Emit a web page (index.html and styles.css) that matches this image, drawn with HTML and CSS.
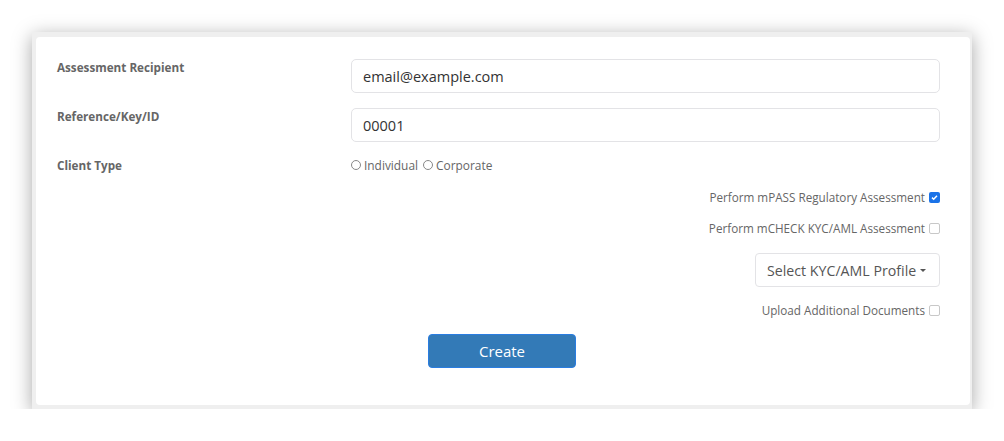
FILE: index.html
```html
<!DOCTYPE html>
<html lang="en">
<head>
    <meta charset="UTF-8">
    <meta name="viewport" content="width=device-width, initial-scale=1.0">
    <title>Create Assessment</title>
    <link rel="stylesheet" href="styles.css">
</head>
<body>
    <div class="frame">
        <form class="card" action="createAssessment">
            <div class="row">
                <label class="row-label" for="recipient">Assessment Recipient</label>
                <input class="text-input" type="text" id="recipient" name="recipient" value="email@example.com">
            </div>

            <div class="row">
                <label class="row-label" for="reference">Reference/Key/ID</label>
                <input class="text-input" type="text" id="reference" name="reference" value="00001">
            </div>

            <div class="row">
                <span class="row-label">Client Type</span>
                <div class="radios">
                    <label class="radio"><span class="radio-dot"></span>Individual</label>
                    <label class="radio"><span class="radio-dot"></span>Corporate</label>
                </div>
            </div>

            <div class="option first">
                <span>Perform mPASS Regulatory Assessment</span>
                <span class="check checked">
                    <svg viewBox="0 0 11 11" width="11" height="11"><path d="M3 5.6 L4.7 7.2 L8 3.8" fill="none" stroke="#fff" stroke-width="1.5"/></svg>
                </span>
            </div>

            <div class="option">
                <span>Perform mCHECK KYC/AML Assessment</span>
                <span class="check"></span>
            </div>

            <div class="option profile">
                <button type="button" class="select-btn">Select KYC/AML Profile<span class="caret"></span></button>
            </div>

            <div class="option">
                <span>Upload Additional Documents</span>
                <span class="check"></span>
            </div>

            <div class="actions">
                <button type="submit" class="create-btn">Create</button>
            </div>
        </form>
    </div>
</body>
</html>
```

FILE: styles.css
```css
body {
    margin: 0;
    padding: 32px 32px 0 32px;
    background-color: #fff;
    font-family: "Open Sans", Arial, sans-serif;
}

.frame {
    width: 940px;
    height: 377px;
    box-sizing: border-box;
    padding: 5px 2px 4px 4px;
    background-color: #efefef;
    box-shadow: 0 4px 18px rgba(0, 0, 0, 0.35);
}

.card {
    height: 100%;
    box-sizing: border-box;
    background-color: #fff;
    border-radius: 4px;
    padding: 22px 30px 0 21px;
    display: flex;
    flex-direction: column;
    gap: 15px;
}

.row {
    display: grid;
    grid-template-columns: 294px 1fr;
    align-items: start;
}

.row-label {
    font-size: 11.7px;
    font-weight: bold;
    line-height: 16px;
    color: #666;
}

.text-input {
    height: 34px;
    box-sizing: border-box;
    border: 1px solid #e3e3e6;
    border-radius: 5px;
    padding: 0 11px;
    font-family: "Open Sans", Arial, sans-serif;
    font-size: 14.5px;
    color: #333;
}

.radios {
    display: flex;
    align-items: center;
    gap: 5px;
    height: 16px;
}

.radio {
    display: flex;
    align-items: center;
    font-size: 11.9px;
    color: #666;
}

.radio-dot {
    width: 8px;
    height: 8px;
    border: 1px solid #888;
    border-radius: 50%;
    margin-right: 3px;
}

.option {
    display: flex;
    justify-content: flex-end;
    align-items: center;
    gap: 4px;
    min-height: 16px;
    font-size: 11.7px;
    color: #666;
}

.option.first {
    margin-top: 1px;
}

.option.profile {
    margin-top: 2px;
}

.check {
    width: 9px;
    height: 9px;
    border: 1px solid #c8c8c8;
    border-radius: 2px;
    display: flex;
}

.check.checked {
    width: 11px;
    height: 11px;
    border: none;
    background-color: #1a73e8;
}

.select-btn {
    height: 34px;
    width: 185px;
    background-color: #fff;
    border: 1px solid #e3e3e6;
    border-radius: 4px;
    font-family: "Open Sans", Arial, sans-serif;
    font-size: 14.2px;
    color: #555;
    padding: 0 11px;
    display: flex;
    align-items: center;
}

.caret {
    width: 0;
    height: 0;
    margin-left: 4px;
    border-left: 3px solid transparent;
    border-right: 3px solid transparent;
    border-top: 3px solid #555;
}

.actions {
    display: flex;
    justify-content: center;
    padding-left: 7px;
    margin-top: 1px;
}

.create-btn {
    width: 148px;
    height: 34px;
    background-color: #337ab7;
    border: 1px solid #2a7de1;
    border-radius: 4px;
    color: #fff;
    font-family: "Open Sans", Arial, sans-serif;
    font-size: 15px;
    cursor: pointer;
}
```
